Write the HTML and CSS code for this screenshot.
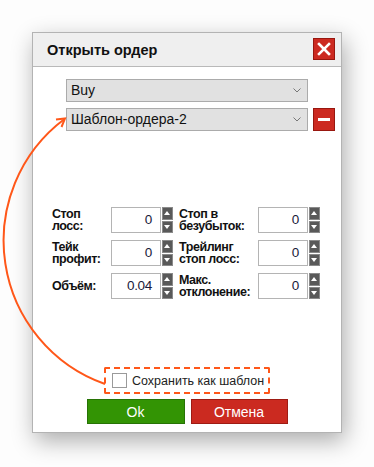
FILE: index.html
```html
<!DOCTYPE html>
<html lang="ru">
<head>
    <meta charset="UTF-8">
    <meta name="viewport" content="width=device-width, initial-scale=1.0">
    <title>Открыть ордер</title>
    <link rel="stylesheet" href="styles.css">
</head>
<body>
    <div class="dialog">
        <div class="titlebar">
            <h1>Открыть ордер</h1>
            <button class="close-btn" title="Закрыть">
                <svg width="14" height="14" viewBox="0 0 14 14"><path d="M2 2L12 12M12 2L2 12" stroke="#fff" stroke-width="2.6" stroke-linecap="square"/></svg>
            </button>
        </div>

        <div class="content">
            <div class="select-row">
                <div class="select">Buy<span class="chevron"><svg width="8" height="5" viewBox="0 0 8 5"><path d="M0.5 0.5L4 4L7.5 0.5" fill="none" stroke="#777" stroke-width="1"/></svg></span></div>
            </div>
            <div class="select-row">
                <div class="select">Шаблон-ордера-2<span class="chevron"><svg width="8" height="5" viewBox="0 0 8 5"><path d="M0.5 0.5L4 4L7.5 0.5" fill="none" stroke="#777" stroke-width="1"/></svg></span></div>
                <button class="minus-btn"><span></span></button>
            </div>

            <!-- поля ордера -->
            <div class="fields">
                <div class="field">
                    <label class="lbl-left">Стоп<br>лосс:</label>
                    <div class="num">0</div>
                    <div class="spin"><span class="up"></span><span class="down"></span></div>
                </div>
                <div class="field">
                    <label class="lbl-right">Стоп в<br>безубыток:</label>
                    <div class="num">0</div>
                    <div class="spin"><span class="up"></span><span class="down"></span></div>
                </div>
                <div class="field">
                    <label class="lbl-left">Тейк<br>профит:</label>
                    <div class="num">0</div>
                    <div class="spin"><span class="up"></span><span class="down"></span></div>
                </div>
                <div class="field">
                    <label class="lbl-right">Трейлинг<br>стоп лосс:</label>
                    <div class="num">0</div>
                    <div class="spin"><span class="up"></span><span class="down"></span></div>
                </div>
                <div class="field">
                    <label class="lbl-left">Объём:</label>
                    <div class="num">0.04</div>
                    <div class="spin"><span class="up"></span><span class="down"></span></div>
                </div>
                <div class="field">
                    <label class="lbl-right">Макс.<br>отклонение:</label>
                    <div class="num">0</div>
                    <div class="spin"><span class="up"></span><span class="down"></span></div>
                </div>
            </div>

            <div class="save">
                <span class="checkbox"></span>
                <span>Сохранить как шаблон</span>
            </div>

            <div class="actions">
                <button class="btn ok">Ok</button>
                <button class="btn cancel">Отмена</button>
            </div>
        </div>
    </div>

    <!-- стрелка-подсказка -->
    <svg class="hint-arrow" width="374" height="467" viewBox="0 0 374 467">
        <path d="M105 384 A152 152 0 0 1 64.5 119" fill="none" stroke="#ff5719" stroke-width="2"/>
        <path d="M56 119.5 L65 118.5 L61.5 127" fill="none" stroke="#ff5719" stroke-width="2" stroke-linejoin="miter"/>
    </svg>
</body>
</html>
```

FILE: styles.css
```css
body {
    margin: 0;
    padding: 32px;
    background: #fdfdfd;
    font-family: "Liberation Sans", Arial, sans-serif;
    color: #111;
}

.dialog {
    width: 310px;
    height: 401px;
    box-sizing: border-box;
    background: #fff;
    border: 1px solid #b3b3b3;
    box-shadow: 3px 8px 22px rgba(0, 0, 0, 0.32);
}

.titlebar {
    height: 33px;
    background: #efefef;
    border-bottom: 1px solid #b9b9b9;
    display: flex;
    align-items: center;
    justify-content: space-between;
    padding: 0 6px 0 14px;
}

.titlebar h1 {
    margin: 0;
    font-size: 14.5px;
    font-weight: bold;
    color: #111;
}

.close-btn {
    width: 22px;
    height: 22px;
    margin-top: -1px;
    padding: 0;
    background: #cc2a21;
    border: 1px solid #98170f;
    display: flex;
    align-items: center;
    justify-content: center;
    cursor: pointer;
}

.content {
    padding-top: 12px;
}

.select-row {
    display: flex;
    gap: 5px;
    margin-left: 33px;
    margin-bottom: 6px;
}

.select {
    width: 242px;
    height: 23px;
    box-sizing: border-box;
    background: #e1e1e1;
    border: 1px solid #ababab;
    font-size: 14px;
    line-height: 21px;
    padding-left: 4px;
    color: #111;
    display: flex;
    justify-content: space-between;
    align-items: center;
}

.chevron {
    display: flex;
    padding-right: 6px;
}

.minus-btn {
    width: 22px;
    height: 23px;
    padding: 0;
    background: #cc2a21;
    border: 1px solid #98170f;
    display: flex;
    align-items: center;
    justify-content: center;
}

.minus-btn span {
    width: 12px;
    height: 3px;
    background: #fff;
}

/* поля */
.fields {
    margin: 76px 0 0 19px;
    display: grid;
    grid-template-columns: 127px 141px;
    row-gap: 7px;
}

.field {
    display: flex;
    align-items: center;
    height: 26px;
}

.field label {
    font-size: 12.5px;
    font-weight: bold;
    line-height: 12.5px;
    letter-spacing: -0.45px;
    color: #111;
}

.lbl-left {
    width: 59px;
}

.lbl-right {
    width: 79px;
}

.num {
    width: 50px;
    height: 26px;
    box-sizing: border-box;
    border: 1px solid #b4b4b4;
    background: #fff;
    text-align: right;
    padding-right: 8px;
    font-size: 13.5px;
    line-height: 24px;
    letter-spacing: -0.3px;
    color: #1a1a3a;
}

.spin {
    width: 11px;
    height: 26px;
    margin-left: 1px;
    display: flex;
    flex-direction: column;
    gap: 1px;
}

.spin span {
    flex: 1;
    background: #595959;
    border: 1px solid #8a8a8a;
    position: relative;
}

.spin span::after {
    content: "";
    position: absolute;
    left: 1px;
    top: 3px;
    border-left: 3.5px solid transparent;
    border-right: 3.5px solid transparent;
}

.spin .up::after {
    border-bottom: 4px solid #fff;
}

.spin .down::after {
    border-top: 4px solid #fff;
}

.save {
    width: 166px;
    height: 27px;
    box-sizing: border-box;
    margin: 68px auto 0;
    border: 2px dashed #ff5719;
    border-radius: 2px;
    display: flex;
    align-items: center;
    gap: 5px;
    padding-left: 6px;
    font-size: 12.5px;
    white-space: nowrap;
    color: #222;
}

.checkbox {
    width: 13px;
    height: 13px;
    flex-shrink: 0;
    border: 1px solid #9a9a9a;
    background: #fff;
}

.actions {
    margin-top: 5px;
    display: flex;
    justify-content: center;
    gap: 6px;
}

.btn {
    width: 98px;
    height: 25px;
    font-family: "Liberation Sans", Arial, sans-serif;
    font-size: 14px;
    color: #fff;
    cursor: pointer;
}

.btn.ok {
    background: #339404;
    border: 1px solid #277305;
}

.btn.cancel {
    width: 97px;
    background: #cb2a20;
    border: 1px solid #9e1b13;
}

.hint-arrow {
    position: absolute;
    top: 0;
    left: 0;
    pointer-events: none;
}
```
